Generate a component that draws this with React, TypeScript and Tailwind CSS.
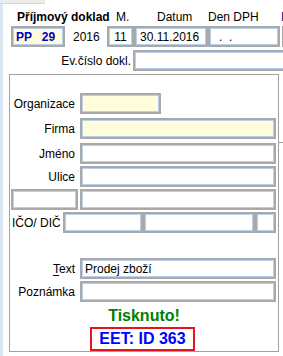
import type { ReactNode } from "react";

function Box({
  className = "",
  children,
}: {
  className?: string;
  children?: ReactNode;
}) {
  return (
    <div
      className={`h-[21px] shrink-0 border-2 border-[#a9a9a9] shadow-[inset_0_0_0_1px_#b8d0eb] flex items-center overflow-hidden whitespace-pre ${className}`}
    >
      {children}
    </div>
  );
}

function Row({
  label,
  className = "",
  children,
}: {
  label?: ReactNode;
  className?: string;
  children?: ReactNode;
}) {
  return (
    <div className={`flex items-center h-[21px] ${className}`}>
      <div className="w-[70px] shrink-0 text-right pr-[5px]">{label}</div>
      {children}
    </div>
  );
}

export default function App() {
  return (
    <div className="w-[283px] h-[356px] overflow-hidden bg-white text-black text-[12px] leading-[14px] font-['Liberation_Sans',Arial,sans-serif]">
      {/* top sliver of the window above */}
      <div className="h-[4px] w-[45px] bg-[#ececec] border-b border-[#d4d4d4]" />

      <div className="flex h-[352px]">
        <div className="w-[3px] shrink-0 bg-[#dae6f4]" />

        <div className="flex-1 flex flex-col min-w-0">
          {/* header labels */}
          <div className="flex mt-[6px] h-[14px] whitespace-nowrap">
            <div className="w-[113px] shrink-0 pl-[14px] font-bold">Příjmový doklad</div>
            <div className="w-[41px] shrink-0">M.</div>
            <div className="w-[51px] shrink-0">Datum</div>
            <div className="w-[73px] shrink-0">Den DPH</div>
            <div className="shrink-0 text-[#2a1850]">DUZP</div>
          </div>

          {/* header inputs */}
          <div className="flex items-center mt-[2px] h-[21px]">
            <Box className="ml-[8px] w-[54px] bg-[#fffcdb] pl-[3px] text-[#0000c8] font-bold">
              PP   29
            </Box>
            <div className="w-[42px] shrink-0 pl-[8px]">2016</div>
            <Box className="w-[27px] justify-center">11</Box>
            <Box className="w-[74px] pl-[4px]">30.11.2016</Box>
            <Box className="w-[72px] pl-[9px]">.  .</Box>
            <Box className="ml-[2px] w-[20px]" />
          </div>

          {/* Ev.číslo */}
          <div className="flex items-center mt-[3px] h-[21px]">
            <div className="w-[130px] shrink-0 text-right pr-[2px]">Ev.číslo dokl.</div>
            <Box className="w-[170px]" />
          </div>

          {/* main panel */}
          <div className="flex mt-[3px]">
            <div className="ml-[6px] w-[270px] h-[278px] shrink-0 border border-[#a0a0a0] flex flex-col pt-[18px]">
              <Row label="Organizace">
                <Box className="w-[81px] bg-[#fffcdb]" />
              </Row>
              <Row label="Firma" className="mt-[4px]">
                <Box className="w-[196px] bg-[#fffcdb]" />
              </Row>
              <Row label="Jméno" className="mt-[4px]">
                <Box className="w-[196px]" />
              </Row>
              <Row label="Ulice" className="mt-[2px]">
                <Box className="w-[196px]" />
              </Row>
              <div className="flex items-center h-[21px] mt-[2px]">
                <Box className="ml-[1px] w-[67px]" />
                <Box className="ml-[2px] w-[196px]" />
              </div>
              <div className="flex items-center h-[21px] mt-[2px]">
                <div className="w-[53px] shrink-0 pl-[2px] whitespace-nowrap">IČO/ DIČ</div>
                <Box className="w-[80px]" />
                <Box className="w-[112px]" />
                <Box className="w-[21px]" />
              </div>
              <Row
                label={
                  <>
                    <span className="underline underline-offset-2">T</span>ext
                  </>
                }
                className="mt-[25px]"
              >
                <Box className="w-[196px] pl-[3px]">Prodej zboží</Box>
              </Row>
              <Row label="Poznámka" className="mt-[2px]">
                <Box className="w-[196px]" />
              </Row>

              <div className="mt-[5px] text-center text-[16px] leading-[18px] font-bold text-[#008000]">
                Tisknuto!
              </div>
              <div className="mt-[2px] ml-[80px] w-[105px] h-[24px] border-2 border-[#e4141c] flex items-center justify-center text-[16px] leading-[20px] font-bold text-[#0000ff]">
                EET: ID 363
              </div>
            </div>
            <div className="w-[4px] shrink-0 mt-[68px] h-px bg-[#a0a0a0]" />
          </div>
        </div>
      </div>
    </div>
  );
}
